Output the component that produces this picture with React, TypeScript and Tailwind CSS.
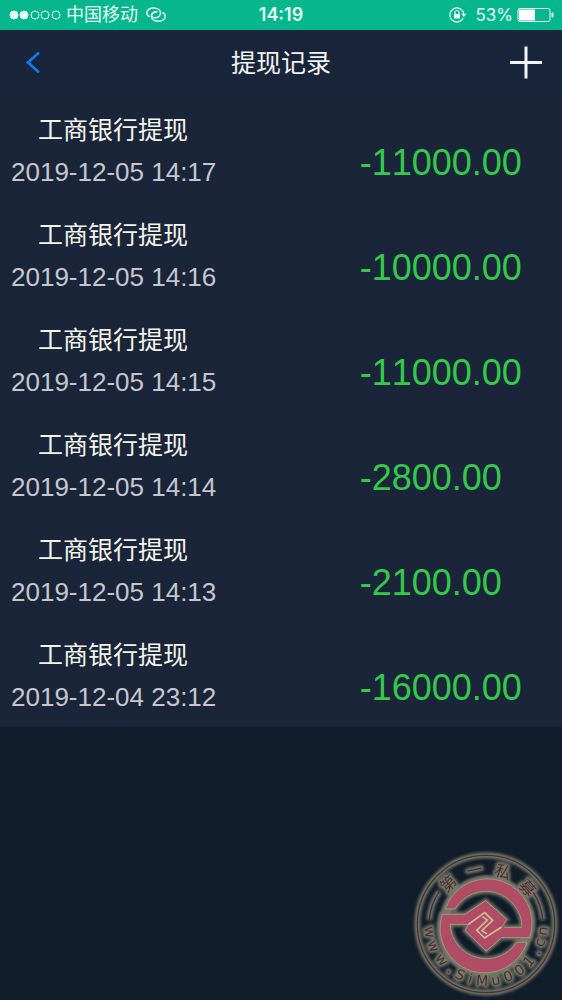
import { FC } from "react";

interface WithdrawRecord {
  title: string;
  time: string;
  amount: string;
}

const records: WithdrawRecord[] = [
  { title: "工商银行提现", time: "2019-12-05 14:17", amount: "-11000.00" },
  { title: "工商银行提现", time: "2019-12-05 14:16", amount: "-10000.00" },
  { title: "工商银行提现", time: "2019-12-05 14:15", amount: "-11000.00" },
  { title: "工商银行提现", time: "2019-12-05 14:14", amount: "-2800.00" },
  { title: "工商银行提现", time: "2019-12-05 14:13", amount: "-2100.00" },
  { title: "工商银行提现", time: "2019-12-04 23:12", amount: "-16000.00" },
];

const StatusBar: FC = () => (
  <div className="grid grid-cols-[1fr_auto_1fr] items-center h-[30px] px-2 bg-[#06b68d] text-[#e6fff5] font-['Inter','Noto_Sans_CJK_SC',sans-serif]">
    <div className="flex items-center gap-1">
      <svg width="54" height="12" viewBox="0 0 54 12" fill="none" stroke="currentColor">
        <circle cx="6" cy="6" r="4" fill="currentColor" />
        <circle cx="16" cy="6" r="4" fill="currentColor" />
        <circle cx="27" cy="6" r="4" />
        <circle cx="37" cy="6" r="4" />
        <circle cx="48" cy="6" r="4" />
      </svg>
      <span className="text-[18px] leading-6">中国移动</span>
      {/* hotspot link */}
      <svg className="ml-1" width="20" height="16" viewBox="0 0 20 16" fill="none" stroke="currentColor" strokeWidth="1.4" strokeLinecap="round">
        <path d="M3.500 9.500C1.500 8.800 .8 7.300 .8 5.800C.8 3 3.800 1 7.500 1C11.500 1 14.500 3 14.500 6C14.500 8.800 12 10.800 9 10.800C6.500 10.800 5 9.500 5.500 7.800C6 6 8 5.200 10.500 4.800" />
        <path d="M16.500 5.700C18.500 6.400 19.200 7.900 19.200 9.400C19.200 12.200 16.200 14.200 12.500 14.200C8.500 14.200 5.500 12.200 5.500 9.200C5.500 6.400 8 4.400 11 4.400" />
      </svg>
    </div>
    <span className="text-[18px] leading-6 font-semibold [font-kerning:none]">14:19</span>
    <div className="flex items-center justify-end gap-1">
      {/* rotation lock */}
      <svg className="mr-1" width="18" height="16" viewBox="0 0 18 16" fill="none" stroke="currentColor" strokeWidth="1.200">
        <path d="M14.200 11A7 7 0 1 1 14.800 7" />
        <path d="M12.200 6.800H17.400L14.800 10Z" fill="currentColor" stroke="none" />
        <rect x="5" y="7" width="6" height="4.500" fill="currentColor" stroke="none" />
        <path d="M6 7V5.500A2 2 0 0 1 10 5.500V7" />
      </svg>
      <span className="text-[17px] leading-6">53%</span>
      <svg width="37" height="16" viewBox="0 0 37 16" fill="none">
        <rect x="1" y="1.500" width="32" height="13" rx="2" stroke="currentColor" />
        <rect x="2" y="2.500" width="16" height="11" fill="#fff" />
        <rect x="34.500" y="5.500" width="2" height="5" rx="1" fill="currentColor" />
      </svg>
    </div>
  </div>
);

const NavBar: FC = () => (
  <header className="grid grid-cols-[1fr_auto_1fr] items-center h-[67px] px-4 border-b border-[#232330] bg-[#19253a]">
    <button type="button" aria-label="返回" className="justify-self-start px-2 py-2">
      <svg width="18" height="24" viewBox="0 0 18 24" fill="none" stroke="#1478ea" strokeWidth="2.800">
        <path d="M15 1.500L4 11.500L15 21.500" />
      </svg>
    </button>
    <h1 className="text-[25px] leading-8 text-[#f4f4f4]">提现记录</h1>
    <button type="button" aria-label="添加" className="justify-self-end">
      <svg width="40" height="36" viewBox="0 0 40 36" fill="none" stroke="#f4f4f4" strokeWidth="3">
        <path d="M4 17.500H36M20 1.500V33.500" />
      </svg>
    </button>
  </header>
);

const RecordItem: FC<{ record: WithdrawRecord }> = ({ record }) => (
  <li className="flex items-center h-[105px] border-b border-[#1e2437] [font-kerning:none]">
    <div className="w-[64%] pl-[11px] pt-1">
      <p className="pl-[27px] text-[25px] leading-[42px] text-[#f6f5ec]">{record.title}</p>
      <p className="text-[26px] leading-[42px] text-[#c6c7cd]">{record.time}</p>
    </div>
    <p className="pt-7 text-[36px] leading-[42px] text-[#35c84a]">{record.amount}</p>
  </li>
);

const topChars = [
  { char: "第", angle: -43 },
  { char: "一", angle: -12 },
  { char: "私", angle: 18 },
  { char: "募", angle: 49 },
];

const bottomChars = [
  { char: "w", angle: 82 },
  { char: "w", angle: 67 },
  { char: "w", angle: 51 },
  { char: ".", angle: 38 },
  { char: "S", angle: 27 },
  { char: "i", angle: 16 },
  { char: "M", angle: 4 },
  { char: "u", angle: -10 },
  { char: "0", angle: -23 },
  { char: "0", angle: -36 },
  { char: "1", angle: -49 },
  { char: ".", angle: -61 },
  { char: "c", angle: -71 },
  { char: "n", angle: -83 },
];

const SealText: FC = () => (
  <g textAnchor="middle">
    <g className="font-['Noto_Sans_CJK_SC',sans-serif]" fontSize="47">
      {topChars.map(({ char, angle }) => (
        <text key={angle} x="243" y="89" transform={`rotate(${angle} 243 237)`}>
          {char}
        </text>
      ))}
    </g>
    <g className="font-['DejaVu_Sans',sans-serif]" fontSize="42">
      {bottomChars.map(({ char, angle }) => (
        <text key={angle} x="243" y="422" transform={`rotate(${angle} 243 237)`}>
          {char}
        </text>
      ))}
    </g>
  </g>
);

const SealLines: FC = () => (
  <g fill="none">
    <circle cx="243" cy="237" r="206" />
    <path d="M73 225A171 171 0 0 1 103 139" />
    <path d="M413 225A171 171 0 0 0 385 142" />
  </g>
);

const SealShape: FC = () => (
  <g>
    <path d="M121 192A131 131 0 0 1 374 278H289L244 318L181 257L239 205L262 226L229 257L246 268L290 247H351A108 108 0 0 0 150 192Z" />
    <path d="M366 292A131 131 0 0 1 112 208H181L242 167L305 223L246 268L229 257L262 226L239 205L190 238H135A109 109 0 0 0 335 292Z" />
  </g>
);

const Seal: FC = () => (
  <svg className="fixed right-0 bottom-0" width="157" height="155" viewBox="0 0 471 465">
    <defs>
      <filter id="glow" x="-10%" y="-10%" width="120%" height="120%">
        <feGaussianBlur stdDeviation="4" />
      </filter>
    </defs>
    {/* soft halo behind every stroke */}
    <g filter="url(#glow)" stroke="#77796a" fill="#77796a">
      <g strokeWidth="17">
        <SealLines />
        <SealShape />
      </g>
      <g strokeWidth="14" strokeLinejoin="round">
        <SealText />
      </g>
    </g>
    <path d="M243 133A108 108 0 0 1 351 247H290L305 223L242 167L181 208H136A108 108 0 0 1 243 133Z" fill="#101c2a" />
    <path d="M243 349A108 108 0 0 1 135 238H190L181 257L244 318L289 278H347A108 108 0 0 1 243 349Z" fill="#101c2a" />
    <g stroke="#77796a" strokeWidth="15" filter="url(#glow)" opacity="0.900" fill="none">
      <SealShape />
    </g>
    <g stroke="#9f9679" strokeWidth="3" fill="#b04c66">
      <SealShape />
    </g>
    {/* interlocked hooks in the middle */}
    <path d="M181 257L239 205L262 226L305 223L246 268L244 318Z" fill="#b04c66" />
    <path d="M190 238L181 257L244 318L289 278L305 223L242 167L181 208Z" fill="#b04c66" />
    <path d="M190 238L181 257L244 318L289 278M290 247L305 223L242 167L181 208" fill="none" stroke="#9f9679" strokeWidth="3" />
    <path d="M190 238L239 203L263 226L231 257L246 267M290 246L239 279L215 256L247 225L232 215" fill="none" stroke="#d0bd90" strokeWidth="5" />
    <g stroke="#4c302f" strokeWidth="4">
      <SealLines />
    </g>
    <g fill="#4f2d30">
      <SealText />
    </g>
  </svg>
);

export default function App() {
  return (
    <div className="min-h-screen bg-[#111d2a] font-['Liberation_Sans','Noto_Sans_CJK_SC',sans-serif]">
      <StatusBar />
      <NavBar />
      <main>
        <ul className="bg-[#1a253a]">
          {records.map((record) => (
            <RecordItem key={record.time} record={record} />
          ))}
        </ul>
      </main>
      <Seal />
    </div>
  );
}
